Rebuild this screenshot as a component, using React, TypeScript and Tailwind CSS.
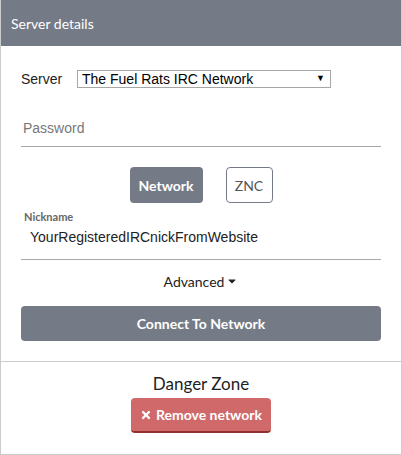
import React from 'react';
import { FaCaretDown, FaTimes } from 'react-icons/fa';

const App: React.FC = () => {
    return (
        <div className="w-[402px] h-[455px] bg-white font-['Lato',sans-serif] text-[#333]">
            <div className="h-[455px] border-x border-b border-[#cccccc] flex flex-col">
                <header className="h-[46px] shrink-0 bg-[#757b86] flex items-center px-[10px]">
                    <h2 className="text-[14px] text-white font-normal">Server details</h2>
                </header>

                <div className="px-[20px] pb-[20px] border-b border-[#cccccc]">
                    <div className="mt-[24px] flex items-center h-[18px] font-['Liberation_Sans',Arial,sans-serif] text-[14px]">
                        <label className="w-[56px] text-[#222]">Server</label>
                        <div className="w-[254px] h-[18px] border border-[#a6a6a6] flex items-center justify-between pl-[4px] pr-[5px] text-black">
                            <span>The Fuel Rats IRC Network</span>
                            <span className="text-[9px]">▼</span>
                        </div>
                    </div>

                    <div className="mt-[22px] h-[37px] border-b border-[#a9a9a9] flex items-center pl-[2px] font-['Liberation_Sans',Arial,sans-serif] text-[14px] text-[#777]">
                        Password
                    </div>

                    <div className="mt-[20px] flex justify-center gap-[23px]">
                        <button className="h-[36px] w-[73px] rounded-[4px] bg-[#757b86] text-white font-bold text-[14px]">Network</button>
                        <button className="h-[36px] w-[47px] rounded-[4px] border border-[#757b86] bg-white text-[#555] text-[14px]">ZNC</button>
                    </div>

                    <div className="mt-[7px] pl-[3px] text-[11px] font-bold text-[#666] leading-[13px]">Nickname</div>
                    <div className="h-[37px] border-b border-[#a9a9a9] flex items-center pb-[7px] pl-[9px] font-['Liberation_Sans',Arial,sans-serif] text-[14px] text-[#222]">
                        YourRegisteredIRCnickFromWebsite
                    </div>

                    <div className="mt-[11px] h-[20px] flex items-center justify-center text-[14px] text-[#222]">
                        Advanced
                        <FaCaretDown className="ml-[2px] text-[12px]" />
                    </div>

                    <button className="mt-[15px] w-full h-[35px] rounded-[4px] bg-[#757b86] text-white font-bold text-[14px]">
                        Connect To Network
                    </button>
                </div>

                <div className="flex flex-col items-center">
                    <div className="mt-[12px] text-[17px] leading-[20px] text-[#222]">Danger Zone</div>
                    <button className="mt-[4px] w-[140px] h-[35px] rounded-[4px] bg-[#d06a6a] border-b-2 border-[#8f2f2f] text-white font-bold text-[14px] flex items-center justify-center gap-[4px]">
                        <FaTimes className="text-[12px]" />
                        Remove network
                    </button>
                </div>
            </div>
        </div>
    );
};

export default App;
